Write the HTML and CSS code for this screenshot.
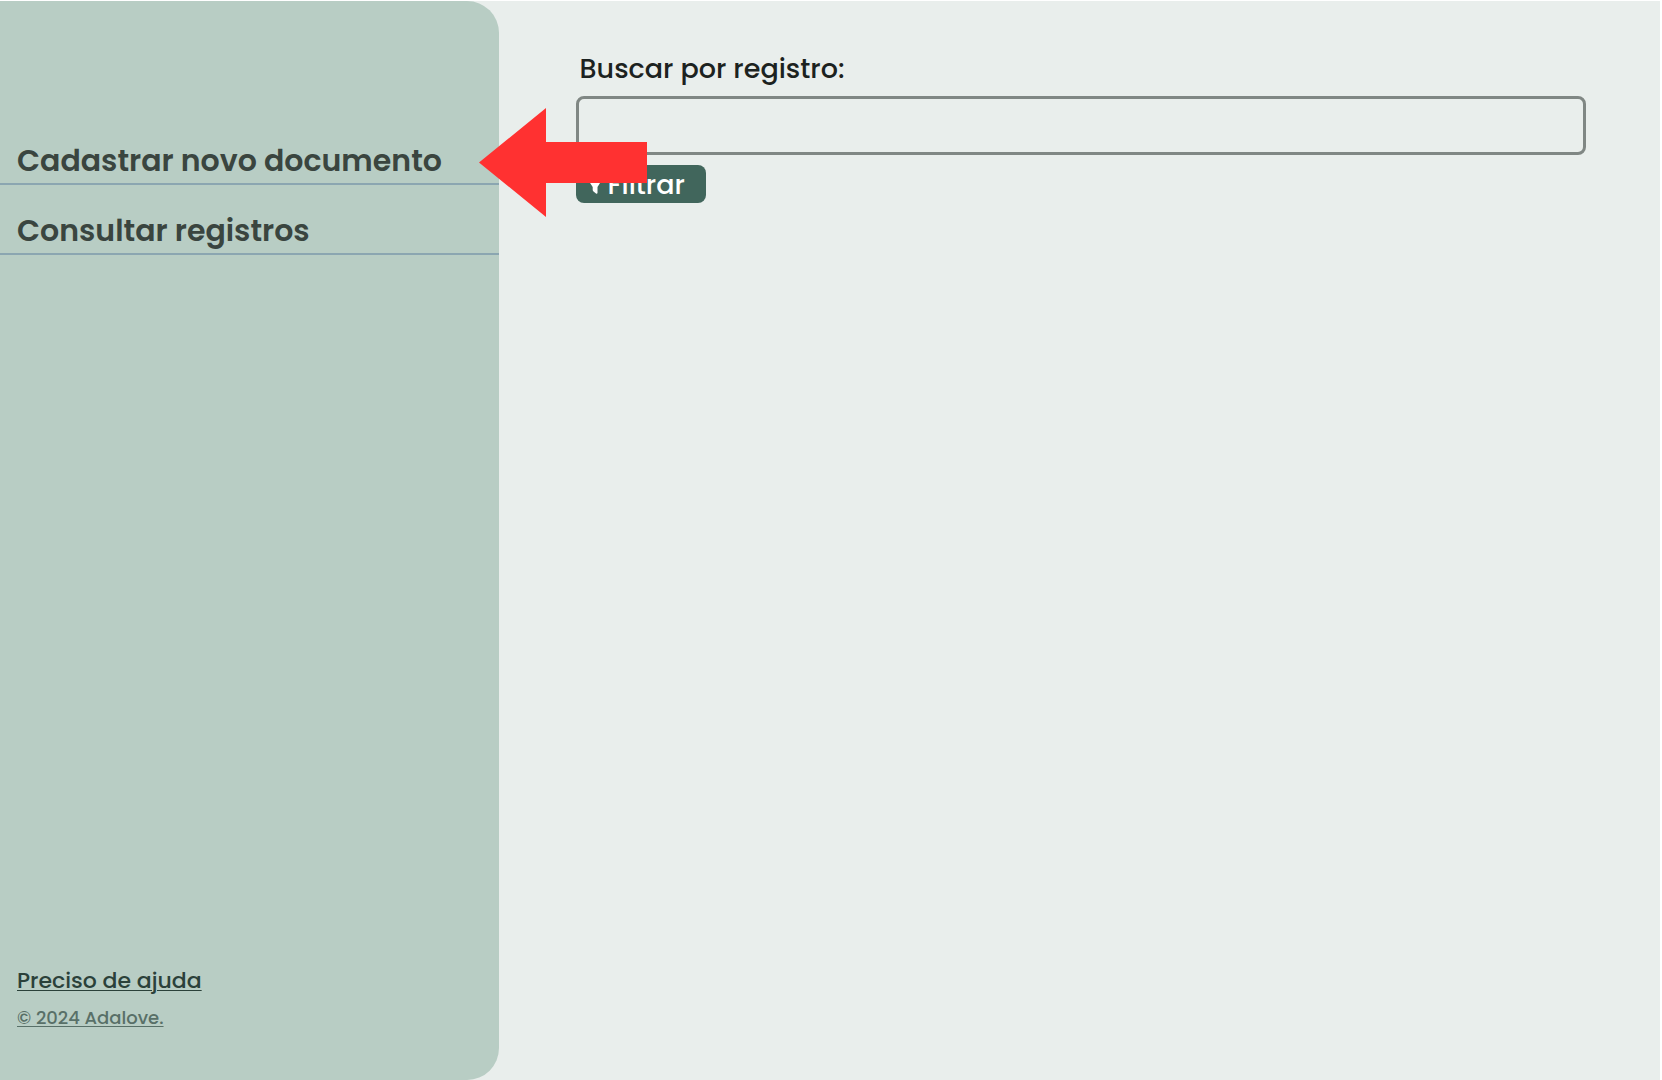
FILE: index.html
```html
<!DOCTYPE html>
<html lang="pt-BR">
<head>
  <meta charset="utf-8">
  <meta name="viewport" content="width=device-width, initial-scale=1">
  <title>Adalove</title>
  <link rel="stylesheet" href="styles.css">
</head>
<body>
  <div class="app">
    <aside class="sidebar">
      <nav class="menu">
        <a class="menu-link" href="#novo">Cadastrar novo documento</a>
        <a class="menu-link" href="#registros">Consultar registros</a>
      </nav>
      <footer class="sidebar-footer">
        <a class="help-link" href="#ajuda">Preciso de ajuda</a>
        <a class="copyright" href="#sobre">© 2024 Adalove.</a>
      </footer>
    </aside>
    <main class="content">
      <form class="search">
        <label class="search-label" for="registro">Buscar por registro:</label>
        <input class="search-input" id="registro" type="text">
        <button class="filter-button" type="button">
          <svg class="filter-icon" viewBox="0 0 16 18" aria-hidden="true"><path d="M1.500 1h13c1.200 0 1.600 1 1 2L10.500 11v5.800c0 .9-.8 1.200-1.500.7l-2.500-2c-.5-.4-.8-.8-.8-1.400V11L.5 3c-.6-1-.2-2 1-2z" fill="currentColor"/></svg>
          Filtrar
        </button>
      </form>
      <svg class="pointer" viewBox="0 0 168 109" aria-hidden="true"><path d="M0 54.500 67 0v34h101v41H67v34z" fill="#ff3131"/></svg>
    </main>
  </div>
</body>
</html>
```
FILE: styles.css
```css
* {
  box-sizing: border-box;
}

body {
  margin: 0;
  background: #fff;
  font-family: Poppins, Inter, sans-serif;
}

.app {
  display: flex;
  min-height: 100vh;
  padding: 1px 2px 0 0;
  background: linear-gradient(#e9eeec, #e9eeec) content-box;
}

.sidebar {
  display: flex;
  flex-direction: column;
  justify-content: space-between;
  width: 30vw;
  padding: 114px 0 50px;
  border-radius: 0 32px 32px 0;
  background: #b8cdc4;
}

.menu-link {
  display: flex;
  align-items: flex-end;
  height: 70px;
  padding: 0 17px 2px;
  border-bottom: 2px solid #8ba6b1;
  color: #3a453f;
  font-size: 30px;
  font-weight: 600;
  line-height: 40px;
  text-decoration: none;
}

.sidebar-footer {
  display: flex;
  flex-direction: column;
  align-items: flex-start;
  gap: 10px;
  padding: 0 17px;
}

.help-link {
  color: #2b413a;
  font-size: 22px;
  font-weight: 500;
  line-height: 30px;
  text-decoration-thickness: 1px;
  text-underline-offset: 2px;
}

.copyright {
  color: #587068;
  font-size: 18px;
  font-weight: 500;
  line-height: 24px;
  text-decoration-thickness: 1px;
  text-underline-offset: 2px;
}

.content {
  position: relative;
  flex: 1;
  padding: 48px 74px 0 77px;
}

.search {
  display: flex;
  flex-direction: column;
  align-items: flex-start;
}

.search-label {
  margin-bottom: 7px;
  padding-left: 4px;
  color: #1c2220;
  font-size: 27px;
  font-weight: 500;
  line-height: 40px;
}

.search-input {
  width: 100%;
  height: 59px;
  padding: 0 16px;
  border: 3px solid #808784;
  border-radius: 8px;
  background: transparent;
  font: inherit;
  font-size: 27px;
}

.filter-button {
  display: flex;
  align-items: center;
  gap: 5px;
  height: 38px;
  margin-top: 10px;
  padding: 2px 21px 0 11px;
  border: 0;
  border-radius: 8px;
  background: #41665c;
  color: #fff;
  font-family: inherit;
  font-size: 27px;
  font-weight: 500;
  line-height: 36px;
}

.filter-icon {
  width: 16px;
  height: 18px;
}

/* Callout arrow that straddles the sidebar edge */
.pointer {
  position: absolute;
  top: 107px;
  left: -20px;
  width: 168px;
  height: 109px;
}
```
